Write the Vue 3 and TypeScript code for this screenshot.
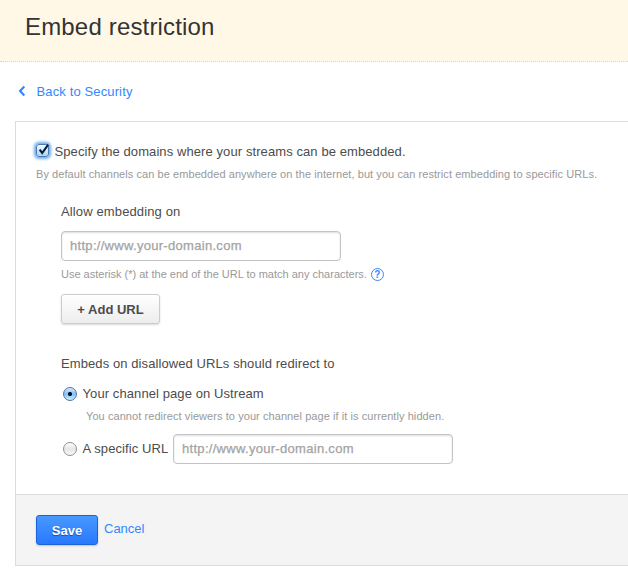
<script setup lang="ts">
import { ref } from 'vue'

type RedirectTarget = 'channel' | 'url'

const restricted = ref(true)
const target = ref<RedirectTarget>('channel')
const domains = ref<string[]>([''])
const redirectUrl = ref('')
const placeholder = 'http://www.your-domain.com'

function addUrl(): void {
  domains.value.push('')
}
</script>

<template>
  <div class="page">
    <header class="header">
      <h1 class="title">Embed restriction</h1>
    </header>

    <a class="back">
      <svg class="chevron" width="8" height="12" viewBox="0 0 8 12">
        <path d="M6.3 1.6 2.1 6l4.2 4.4" fill="none" stroke="#3388ff" stroke-width="2.2" />
      </svg>
      <span class="back-text">Back to Security</span>
    </a>

    <form class="panel" @submit.prevent>
      <div class="content">
        <label class="check-row">
          <input v-model="restricted" class="native" type="checkbox" />
          <span class="checkbox">
            <svg v-if="restricted" class="tick" width="14" height="14" viewBox="0 0 14 14">
              <path d="M2.6 6.6 5.2 10 11.2 1.6" fill="none" stroke="#0c1c30" stroke-width="2.1" />
            </svg>
          </span>
          <span class="text check-text">Specify the domains where your streams can be embedded.</span>
        </label>
        <p class="help intro">By default channels can be embedded anywhere on the internet, but you can restrict embedding to specific URLs.</p>

        <section class="options">
          <div class="text allow-label">Allow embedding on</div>
          <input v-for="(_, i) in domains" :key="i" v-model="domains[i]" class="field" type="text" :placeholder="placeholder" />
          <div class="hint-row">
            <span class="help asterisk">Use asterisk (*) at the end of the URL to match any characters.</span>
            <span class="question">?</span>
          </div>
          <button class="button add" type="button" @click="addUrl">+ Add URL</button>

          <div class="text redirect-label">Embeds on disallowed URLs should redirect to</div>
          <label class="radio-row">
            <input v-model="target" class="native" type="radio" value="channel" />
            <span class="radio" :class="{ on: target === 'channel' }"></span>
            <span class="text channel-text">Your channel page on Ustream</span>
          </label>
          <p class="help hidden-hint">You cannot redirect viewers to your channel page if it is currently hidden.</p>
          <div class="url-row">
            <label class="radio-row specific">
              <input v-model="target" class="native" type="radio" value="url" />
              <span class="radio" :class="{ on: target === 'url' }"></span>
              <span class="text specific-text">A specific URL</span>
            </label>
            <input v-model="redirectUrl" class="field" type="text" :placeholder="placeholder" />
          </div>
        </section>
      </div>

      <footer class="footer">
        <button class="button save" type="submit">Save</button>
        <a class="cancel">Cancel</a>
      </footer>
    </form>
  </div>
</template>

<style>
body {
  background: #fff;
  overflow: hidden;
}
</style>

<style scoped>
.page {
  height: 586px;
  overflow: hidden;
  font: 13px/20px "Liberation Sans", Arial, sans-serif;
  color: #4c4c4c;
  white-space: nowrap;
}
.page * {
  box-sizing: border-box;
}
.text {
  letter-spacing: 0.09px;
}
.header {
  height: 62px;
  padding: 12px 25px 0;
  background: #fff8e7;
  border-bottom: 1px dotted #dcd6bd;
}
.title {
  margin: 0;
  font-size: 24px;
  line-height: 30px;
  font-weight: 400;
  letter-spacing: 0.17px;
  color: #333;
}
.back {
  display: flex;
  align-items: center;
  gap: 10.5px;
  margin: 20px 0 0 18px;
  height: 20px;
  color: #3388ff;
}
.back-text {
  letter-spacing: 0.13px;
}
.chevron {
  flex: none;
  margin-bottom: 2px;
}
.panel {
  width: 640px;
  margin: 19px 0 0 15px;
  border: 1px solid #dcdcdc;
}
.content {
  height: 372px;
  padding: 20px 20px 0;
}
.native {
  position: absolute;
  opacity: 0;
  pointer-events: none;
}
.check-row,
.radio-row {
  display: flex;
  align-items: center;
  height: 20px;
}
.checkbox {
  position: relative;
  flex: none;
  width: 13px;
  height: 13px;
  margin: -4px 5.5px 0 0;
  border: 1px solid #477bb5;
  border-radius: 3px;
  background: linear-gradient(#f4faff, #a9d4fa);
  box-shadow: 0 0 3px 2px #6aacec;
}
.tick {
  position: absolute;
  left: 0;
  top: -2px;
}
.help {
  margin: 0;
  font-size: 11px;
  line-height: 16px;
  letter-spacing: 0.07px;
  color: #999;
}
.help.asterisk {
  letter-spacing: 0;
}
.intro {
  margin-top: 4px;
}
.options {
  padding-left: 25px;
}
.allow-label {
  margin: 20px 0 9px;
  letter-spacing: 0.13px;
}
.field {
  display: block;
  width: 280px;
  height: 30px;
  padding: 0 8px 2px;
  font: 13px "Liberation Sans", Arial, sans-serif;
  letter-spacing: 0.3px;
  color: #4c4c4c;
  border: 1px solid #c4c4c4;
  border-radius: 4px;
  background: #fff;
  box-shadow: inset 0 1px 2px #ddd;
  outline: none;
}
.field::placeholder {
  color: #a3a3a3;
  opacity: 1;
  -webkit-text-stroke: 0.25px #a3a3a3;
}
.hint-row {
  display: flex;
  align-items: center;
  gap: 4px;
  height: 16px;
  margin-top: 5px;
}
.question {
  width: 13px;
  height: 13px;
  border: 1px solid #3388ff;
  border-radius: 50%;
  color: #3388ff;
  font-size: 10px;
  font-weight: 700;
  line-height: 11px;
  text-align: center;
}
.button {
  height: 30px;
  padding: 0;
  font: bold 13px "Liberation Sans", Arial, sans-serif;
  border-radius: 3px;
}
.add {
  display: block;
  width: 99px;
  margin-top: 12px;
  color: #4c4c4c;
  border: 1px solid #ccc;
  background: linear-gradient(#fff, #ededed);
  box-shadow: 0 1px 2px rgba(0, 0, 0, 0.15);
}
.redirect-label {
  margin: 30px 0 10px;
}
.radio {
  position: relative;
  flex: none;
  width: 14px;
  height: 14px;
  margin: 0 5.5px 0 2px;
  border: 1px solid #919191;
  border-radius: 50%;
  background: linear-gradient(#fff, #e5e5e5 50%, #fafafa);
}
.radio.on {
  border-color: #5870a8;
  background: radial-gradient(circle, #06142b 0 1.7px, transparent 2.4px), linear-gradient(#d9eaff, #85bff4 50%, #c7f1ff);
}
.hidden-hint {
  margin: 4px 0 10px 25px;
}
.url-row {
  display: flex;
  align-items: center;
}
.specific {
  width: 112px;
}
.footer {
  display: flex;
  align-items: flex-start;
  gap: 6px;
  height: 71px;
  padding: 20px 20px 0;
  border-top: 1px solid #dcdcdc;
  background: #f4f4f4;
}
.save {
  width: 62px;
  color: #fff;
  border: 1px solid #1c63d5;
  background: linear-gradient(#4898ff, #2878ff);
  text-shadow: 0 1px 1px #1250a8;
  box-shadow: 0 1px 2px rgba(0, 0, 0, 0.2);
}
.cancel {
  margin-top: 4px;
  color: #3388ff;
}
</style>
